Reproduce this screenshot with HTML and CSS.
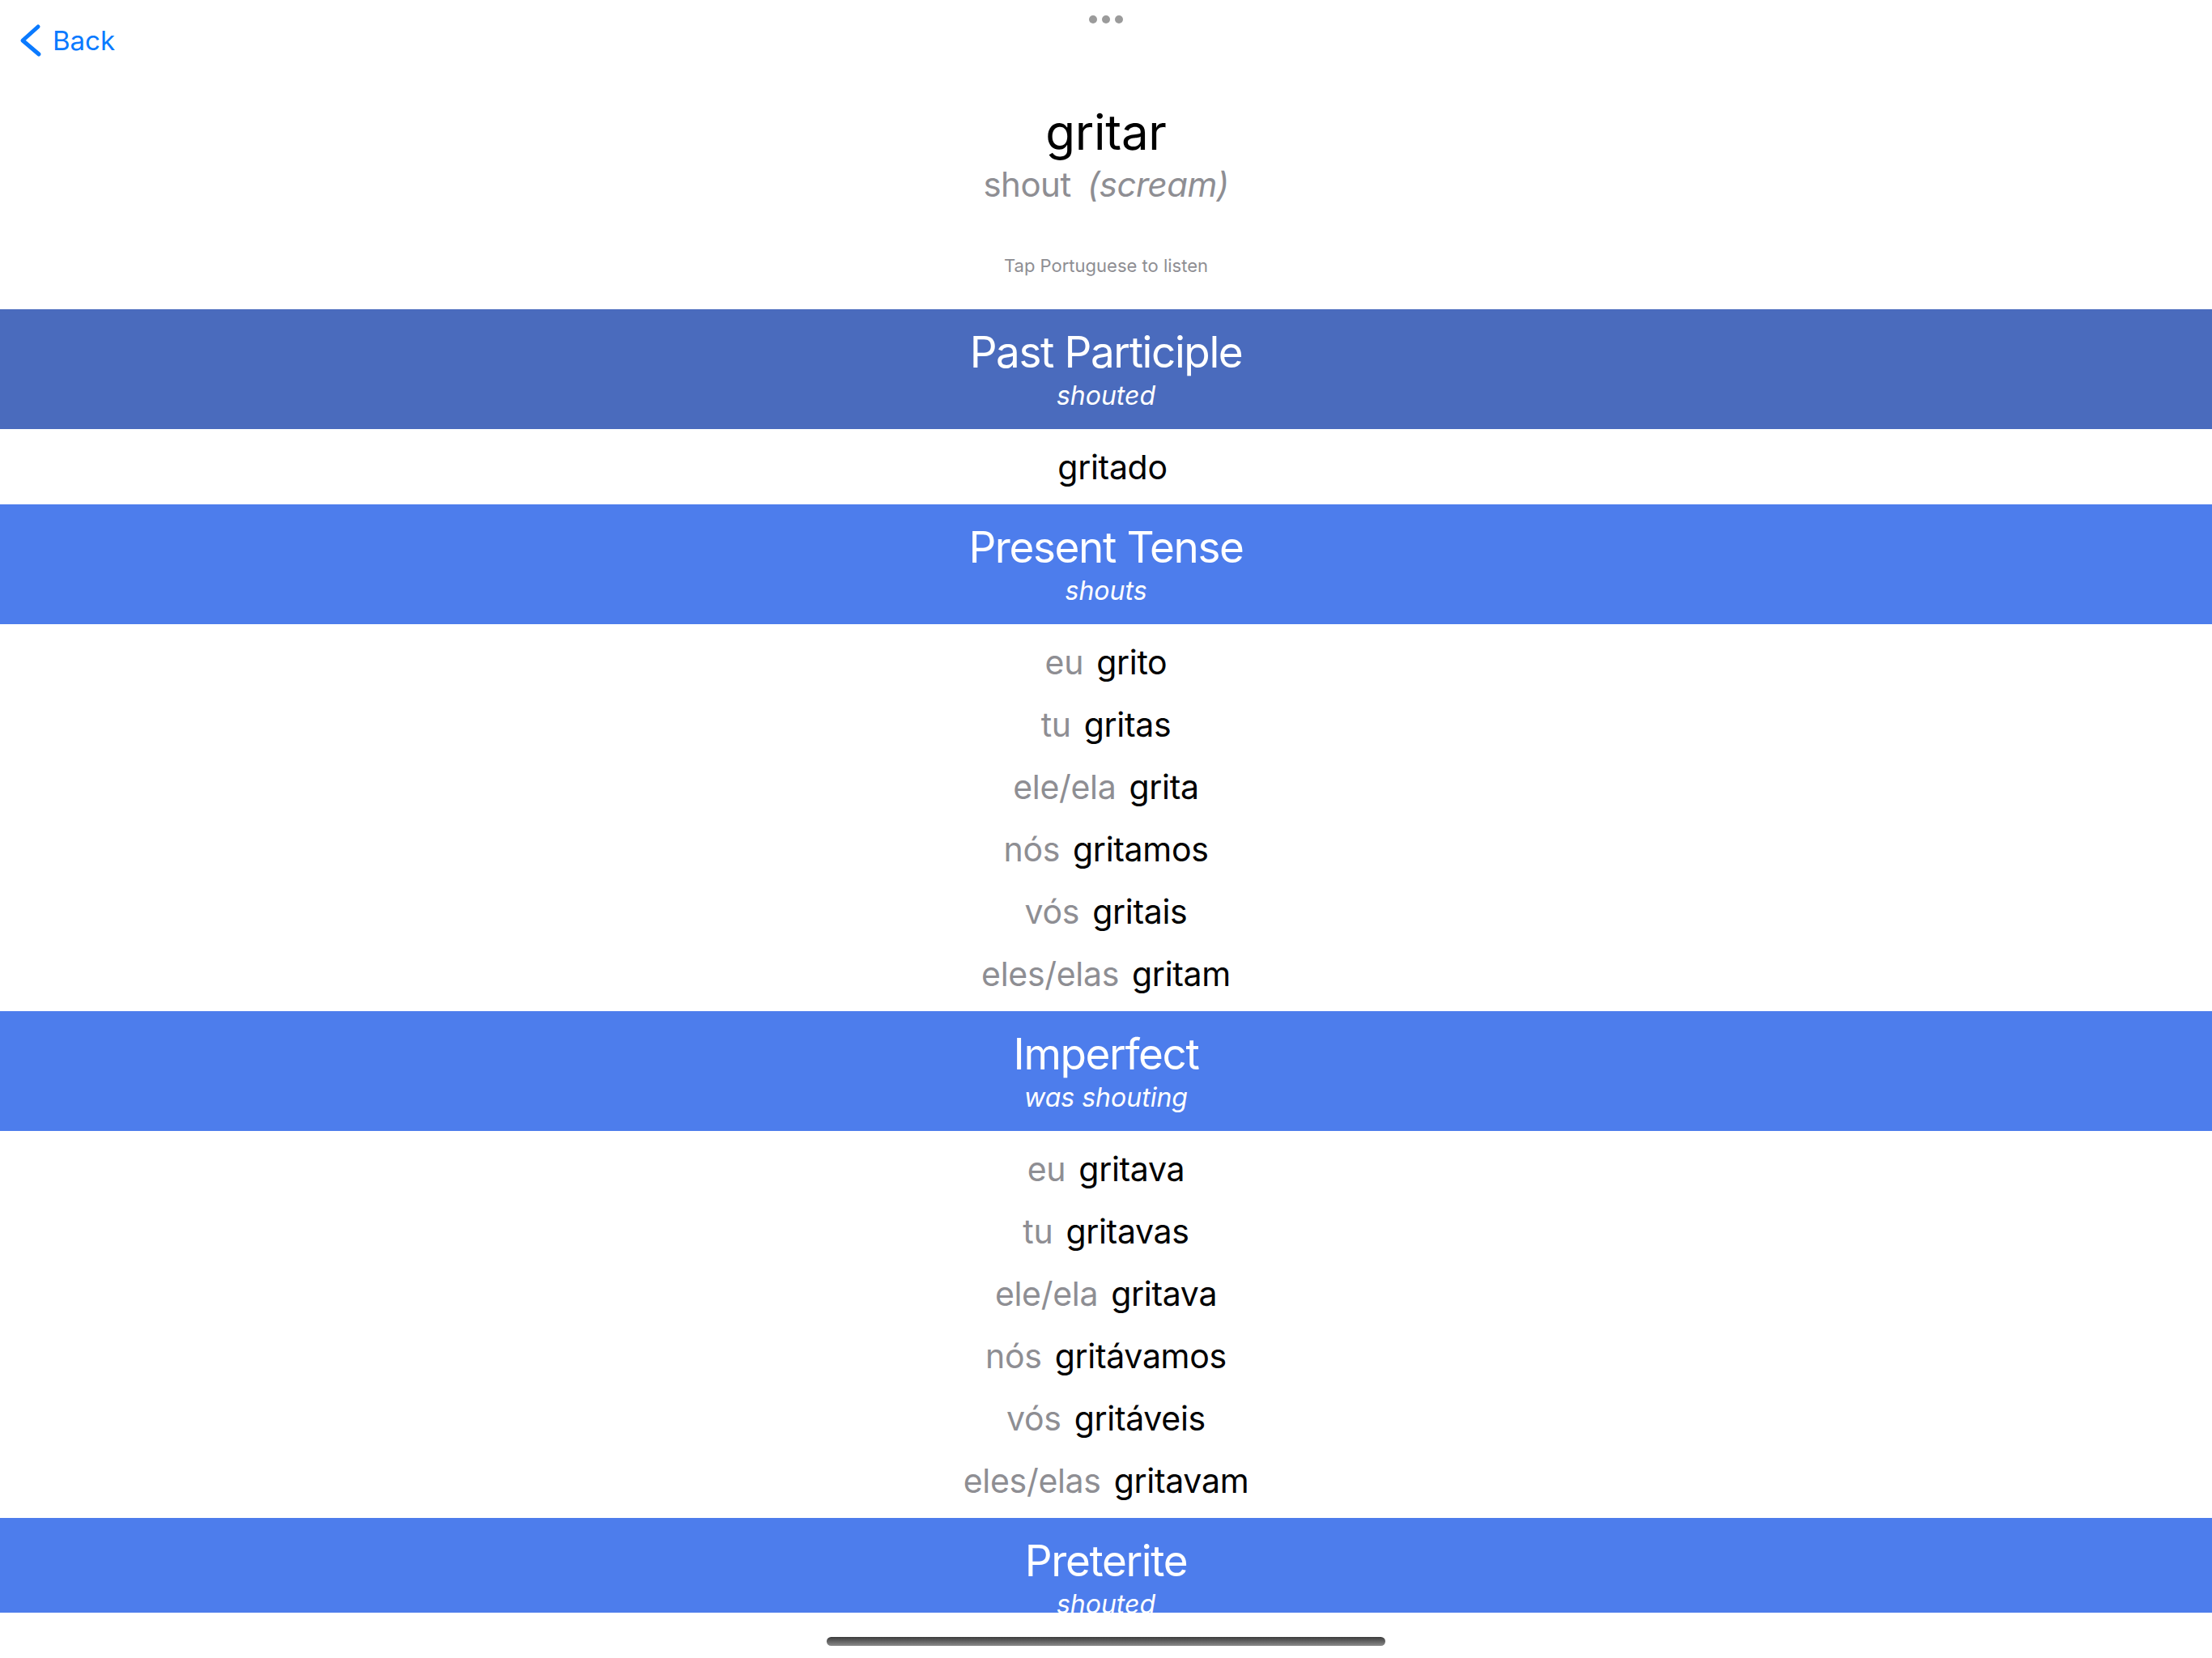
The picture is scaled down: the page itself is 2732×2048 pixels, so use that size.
FILE: index.html
```html
<!DOCTYPE html>
<html lang="pt-BR">
<head>
  <meta charset="UTF-8">
  <meta name="viewport" content="width=device-width, initial-scale=1.0">
  <title>gritar</title>
  <link rel="stylesheet" href="styles.css">
</head>
<body>
  <div class="tela">
    <div class="pontos"><span></span><span></span><span></span></div>

    <header class="topo">
      <nav class="voltar">
        <svg width="30" height="44" viewBox="0 0 30 44">
          <polyline points="25,5 6,22 26,39" fill="none" stroke="currentColor" stroke-width="5" stroke-linecap="round" stroke-linejoin="round"/>
        </svg>
        <a href="#">Back</a>
      </nav>
      <h1 class="verbo">gritar</h1>
      <p class="traducao">shout <em>(scream)</em></p>
      <p class="dica">Tap Portuguese to listen</p>
    </header>

    <main class="tempos" id="temposContainer">
      <!-- Tempos são inseridos via JS -->
    </main>

    <div class="rodape"><span class="indicador"></span></div>
  </div>

  <script>
    const tempos = [
      {"nome":"Past Participle","ingles":"shouted","escuro":true,"formas":[["","gritado"]]},
      {"nome":"Present Tense","ingles":"shouts","formas":[["eu","grito"],["tu","gritas"],["ele/ela","grita"],["nós","gritamos"],["vós","gritais"],["eles/elas","gritam"]]},
      {"nome":"Imperfect","ingles":"was shouting","formas":[["eu","gritava"],["tu","gritavas"],["ele/ela","gritava"],["nós","gritávamos"],["vós","gritáveis"],["eles/elas","gritavam"]]},
      {"nome":"Preterite","ingles":"shouted","formas":[]}
    ];

    const temposContainer = document.getElementById('temposContainer');

    tempos.forEach(tempo => {
      const secao = document.createElement('section');
      secao.innerHTML = `
        <div class="faixa ${tempo.escuro ? 'escuro' : ''}">
          <h2>${tempo.nome}</h2>
          <p>${tempo.ingles}</p>
        </div>
        <ul class="formas">
          ${tempo.formas.map(f => `<li><span class="pronome">${f[0]}</span><span class="forma">${f[1]}</span></li>`).join('')}
        </ul>
      `;
      temposContainer.appendChild(secao);
    });
  </script>
</body>
</html>
```

FILE: styles.css
```css
:root {
  --azul1: #4a6bbd;
  --azul2: #4d7dec;
  --link: #0a7aff;
  --cinza: #8e8e93;
  --pontos: #9b9b9b;
}

* {
  box-sizing: border-box;
  font-family: 'Inter', 'Noto Sans', sans-serif;
  margin: 0;
  padding: 0;
}

body {
  background-color: white;
  color: black;
}

.tela {
  position: relative;
  height: 2048px;
  display: flex;
  flex-direction: column;
  overflow: hidden;
}

.pontos {
  position: absolute;
  top: 19px;
  left: 50%;
  transform: translateX(-50%);
  display: flex;
  gap: 6px;
}

.pontos span {
  width: 10px;
  height: 10px;
  border-radius: 50%;
  background-color: var(--pontos);
}

.topo {
  height: 382px;
  flex-shrink: 0;
  text-align: center;
}

.voltar {
  display: flex;
  align-items: center;
  gap: 13px;
  padding: 28px 0 0 22px;
  height: 72px;
  color: var(--link);
}

.voltar a {
  color: var(--link);
  text-decoration: none;
  font-size: 33px;
  line-height: 40px;
}

.verbo {
  font-size: 60px;
  font-weight: 400;
  line-height: 72px;
  margin-top: 55px;
  letter-spacing: -0.3px;
}

.traducao {
  font-size: 42px;
  line-height: 50px;
  margin-top: 4px;
  color: var(--cinza);
  word-spacing: 9px;
  letter-spacing: -0.5px;
}

.traducao em {
  font-style: italic;
}

.dica {
  font-size: 22px;
  line-height: 26px;
  margin-top: 62px;
  color: var(--cinza);
}

.tempos {
  flex: 1;
  overflow: hidden;
}

.faixa {
  height: 148px;
  padding-top: 21px;
  background-color: var(--azul2);
  color: white;
  text-align: center;
}

.faixa.escuro {
  background-color: var(--azul1);
}

.faixa h2 {
  font-size: 53px;
  font-weight: 400;
  line-height: 65px;
  letter-spacing: -1.4px;
}

.faixa p {
  font-size: 32px;
  font-style: italic;
  line-height: 38px;
  margin-top: 2px;
}

.formas {
  list-style: none;
  padding: 8px 0;
}

.formas li {
  height: 77px;
  display: flex;
  justify-content: center;
  align-items: center;
  gap: 16px;
  font-size: 41px;
  letter-spacing: -0.3px;
}

.pronome {
  color: var(--cinza);
}

.rodape {
  height: 56px;
  flex-shrink: 0;
  display: flex;
  justify-content: center;
  padding-top: 30px;
}

.indicador {
  width: 690px;
  height: 11px;
  border-radius: 6px;
  background: linear-gradient(#3c3c3c, #8a8a8a);
}
```
